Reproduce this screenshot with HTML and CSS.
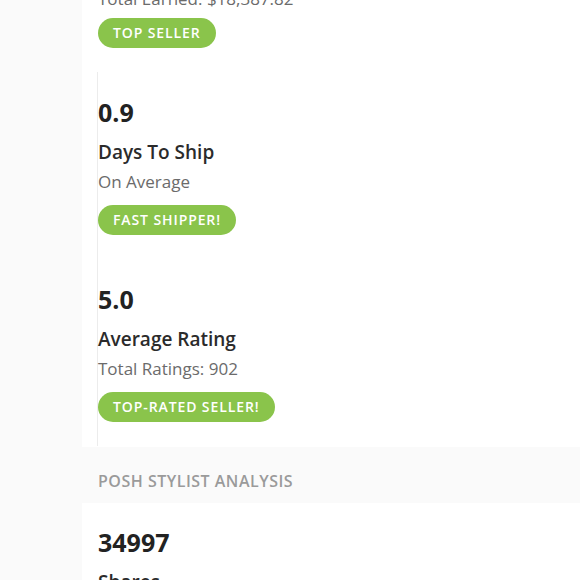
FILE: index.html
```html
<!DOCTYPE html>
<html lang="en">
<head>
<meta charset="utf-8">
<title>Seller Stats</title>
<link rel="stylesheet" href="styles.css">
</head>
<body>
<div class="page">
  <aside class="sidebar"></aside>
  <main class="main">
    <section class="stat stat-first">
      <p class="stat-sub">Total Earned: $18,387.82</p>
      <span class="pill">TOP SELLER</span>
    </section>
    <div class="stat-list">
      <section class="stat">
        <div class="stat-num">0.9</div>
        <h3 class="stat-title">Days To Ship</h3>
        <p class="stat-sub">On Average</p>
        <span class="pill">FAST SHIPPER!</span>
      </section>
      <section class="stat">
        <div class="stat-num">5.0</div>
        <h3 class="stat-title">Average Rating</h3>
        <p class="stat-sub">Total Ratings: 902</p>
        <span class="pill">TOP-RATED SELLER!</span>
      </section>
    </div>
    <div class="band">POSH STYLIST ANALYSIS</div>
    <div class="analysis">
      <div class="stat-num">34997</div>
      <h3 class="stat-title">Shares</h3>
    </div>
  </main>
</div>
</body>
</html>
```
FILE: styles.css
```css
* { box-sizing: border-box; }
html, body { margin: 0; padding: 0; }
body {
  background: #fafafa;
  font-family: "Open Sans", "Liberation Sans", sans-serif;
  color: #2b2b2b;
  height: 580px;
  overflow: hidden;
}
.page {
  display: flex;
  min-height: 580px;
}
.sidebar {
  width: 82px;
  flex: none;
  background: #fafafa;
}
.main {
  flex: 1;
  background: #fff;
  padding-top: 1px;
  margin-top: -14px;
}
.stat {
  display: flex;
  flex-direction: column;
  align-items: flex-start;
  padding: 25px 0 24px 0;
}
.stat.stat-first {
  padding: 0 0 24px 16px;
}
.stat-list {
  margin-left: 15px;
  border-left: 1px solid #ececec;
}
.stat-num {
  font-size: 25px;
  font-weight: 700;
  line-height: 30px;
  color: #222;
}
.stat-title {
  margin: 13px 0 0;
  font-size: 19px;
  font-weight: 600;
  line-height: 24px;
  color: #2b2b2b;
}
.stat-sub {
  margin: 6px 0 11px;
  font-size: 17px;
  line-height: 24px;
  color: #6b6b6b;
}
.stat.stat-first .stat-sub { margin: 0 0 7px; }
.pill {
  display: inline-block;
  height: 30px;
  line-height: 30px;
  padding: 0 15px;
  border-radius: 15px;
  background: #8ac44b;
  color: #fff;
  font-size: 14px;
  font-weight: 600;
  letter-spacing: 0.9px;
}
.band {
  margin-top: 1px;
  background: #fafafa;
  height: 56px;
  padding: 24px 16px 0;
  font-size: 16px;
  line-height: 20px;
  color: #9a9a9a;
  letter-spacing: 0.5px;
  font-weight: 600;
}
.analysis {
  padding: 24px 16px;
}
```
